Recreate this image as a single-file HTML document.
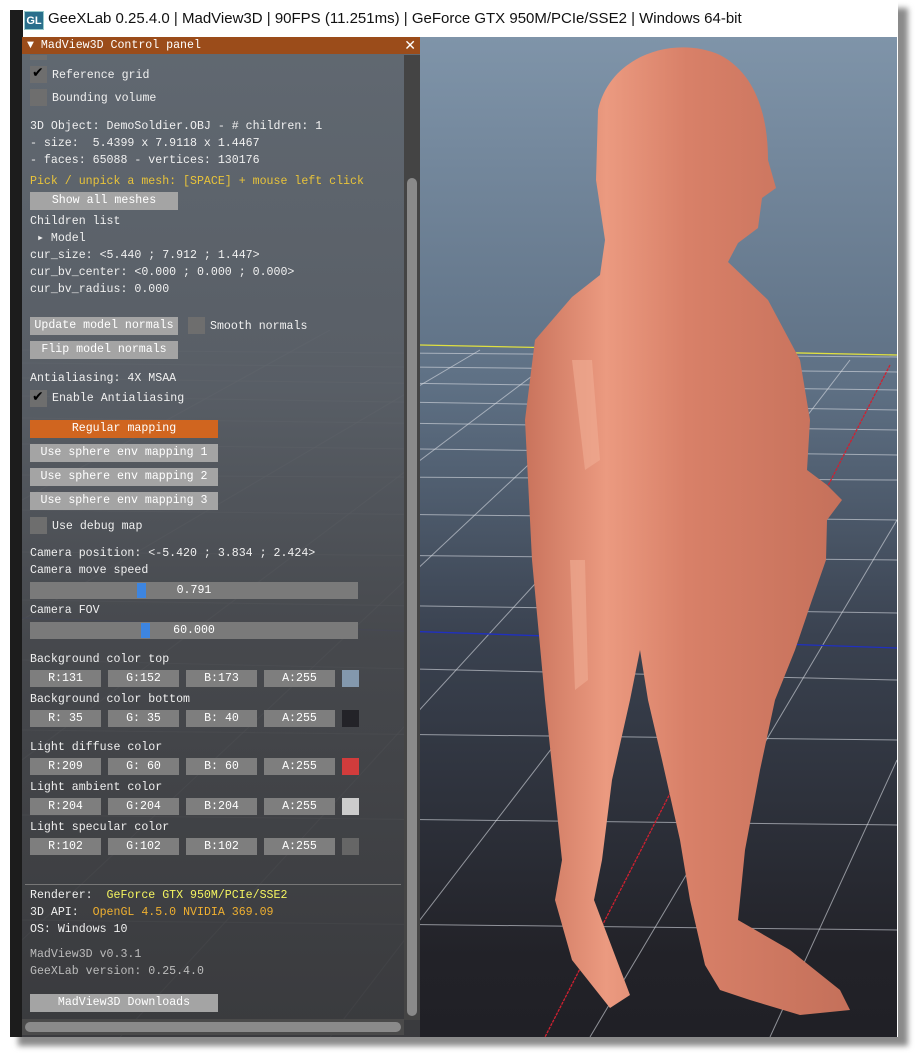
<!DOCTYPE html>
<html><head><meta charset="utf-8"><style>
*{margin:0;padding:0;box-sizing:border-box}
body{width:922px;height:1062px;background:#fff;position:relative;overflow:hidden;font-family:"Liberation Mono",monospace}
.shadow{position:absolute;left:18px;top:8px;width:890px;height:1038px;background:#8a8a8a;filter:blur(3px)}
.win{position:absolute;left:10px;top:0;width:888px;height:1037px;background:#fff}
.lbar{position:absolute;left:10px;top:10px;width:13px;height:1027px;background:#1c1c1c}
.title{position:absolute;left:48px;top:10px;font:15px "Liberation Sans",sans-serif;color:#111;white-space:nowrap}
.ico{position:absolute;left:24px;top:11px;width:20px;height:19px;background:#2a6f8c;color:#fff;font:bold 11px "Liberation Sans",sans-serif;text-align:center;line-height:19px;border:1px solid #9cc}
.vp{position:absolute;left:22px;top:37px;width:875px;height:1000px;background:linear-gradient(#7f94a9,#5e7084 35%,#3a4250 60%,#222228 92%,#202026);overflow:hidden}
.panel{position:absolute;left:22px;top:37px;width:398px;height:1000px;background:linear-gradient(#5f666e,#585d64 35%,#47494d 60%,#3b3c3f);opacity:.95}
.ph{position:absolute;left:22px;top:37px;width:398px;height:17px;background:#9b4c1a;color:#fff;font-size:11.6px;line-height:17px;padding-left:5px;white-space:pre}
.ph span{position:absolute;right:4px;top:0;font-family:"Liberation Sans",sans-serif;font-size:14px}
.t{position:absolute;left:30px;font-size:11.6px;color:#f0f0f0;white-space:pre;line-height:14px;margin-top:1px}
.y{color:#e8c33a}.yy{color:#f4f460}.o{color:#f0b030}.g{color:#bcbcbc}
.b{position:absolute;height:18px;background:#a4a4a4;color:#fff;font-size:11.6px;line-height:18px;text-align:center;white-space:pre}
.cb{position:absolute;left:30px;width:17px;height:17px;background:#6e6e6e}
.ck::after{content:"✔";position:absolute;left:2px;top:-1px;color:#000;font:bold 14px "DejaVu Sans",sans-serif}
.f{position:absolute;height:17px;width:71px;background:#7e7e7e;color:#fff;font-size:11.6px;line-height:17px;text-align:center;white-space:pre}
.sw{position:absolute;left:342px;width:17px;height:17px}
.sl{position:absolute;left:30px;width:328px;height:17px;background:#7a7a7a;color:#fff;font-size:11.6px;line-height:17px;text-align:center}
.h{position:absolute;top:1px;width:9px;height:15px;background:#3d85e0}
</style></head><body>
<div class="shadow"></div>
<div class="win"></div>
<div class="lbar"></div>
<div class="ico">GL</div>
<div class="title">GeeXLab 0.25.4.0 | MadView3D | 90FPS (11.251ms) | GeForce GTX 950M/PCIe/SSE2 | Windows 64-bit</div>
<div class="vp">
<svg width="875" height="1000" viewBox="22 37 875 1000" style="position:absolute;left:0;top:0">
<g stroke="#d8dce2" stroke-opacity=".6" stroke-width="1" fill="none">
<line x1="22" y1="350" x2="897" y2="357"/><line x1="22" y1="363" x2="897" y2="372"/><line x1="22" y1="378" x2="897" y2="390"/>
<line x1="22" y1="396" x2="897" y2="410"/><line x1="22" y1="418" x2="897" y2="430"/><line x1="22" y1="444" x2="897" y2="455"/>
<line x1="22" y1="475" x2="897" y2="480"/><line x1="22" y1="510" x2="897" y2="520"/><line x1="22" y1="552" x2="897" y2="560"/>
<line x1="22" y1="600" x2="897" y2="613"/><line x1="22" y1="660" x2="897" y2="680"/><line x1="22" y1="730" x2="897" y2="740"/>
<line x1="22" y1="815" x2="897" y2="825"/><line x1="22" y1="920" x2="897" y2="930"/>
<line x1="22" y1="500" x2="330" y2="330"/><line x1="22" y1="620" x2="480" y2="350"/><line x1="22" y1="760" x2="560" y2="355"/>
<line x1="22" y1="940" x2="640" y2="360"/><line x1="120" y1="1037" x2="740" y2="360"/><line x1="330" y1="1037" x2="850" y2="360"/>
<line x1="590" y1="1037" x2="897" y2="520"/><line x1="770" y1="1037" x2="897" y2="760"/>
</g>
<line x1="420" y1="345" x2="897" y2="355" stroke="#e0e040" stroke-width="1.3"/>
<line x1="22" y1="618" x2="897" y2="648" stroke="#2030c0" stroke-width="1.3"/>
<line x1="890" y1="365" x2="545" y2="1037" stroke="#d02030" stroke-width="1.3" stroke-dasharray="3 1"/>
<defs><linearGradient id="sk" x1="0" x2="1"><stop offset="0" stop-color="#c9735c"/><stop offset=".25" stop-color="#eb9a80"/><stop offset=".5" stop-color="#d88068"/><stop offset="1" stop-color="#c4705a"/></linearGradient></defs>
<path fill="url(#sk)" d="M598 110 C610 55 675 35 720 55 C758 75 768 120 768 160 L776 188 L762 198 L758 228 L738 243 L728 262 L768 300 L800 360 L810 420 L807 470 L827 485 L842 500 L827 520 L826 560 L812 600 L795 650 L775 700 L760 770 L745 850 L738 920 L790 950 L840 990 L850 1010 L800 1015 L750 1000 L720 990 L705 965 L690 900 L680 840 L662 760 L648 700 L640 650 L630 700 L612 780 L602 860 L594 900 L630 995 L610 1008 L572 960 L555 900 L562 860 L545 700 L532 560 L525 420 L535 340 L572 297 L600 275 L605 240 L596 180 Z"/>
<path fill="#f0ae95" opacity=".6" d="M572 360 L592 360 L600 460 L585 470 Z M570 560 L585 560 L588 680 L575 690 Z"/>
</svg>
</div>
<div class="panel"></div>
<div class="ph">▼ MadView3D Control panel<span>✕</span></div>
<div style="position:absolute;left:404px;top:55px;width:16px;height:965px;background:#444"></div>
<div style="position:absolute;left:407px;top:178px;width:10px;height:838px;background:#8a8a8a;border-radius:5px"></div>
<div style="position:absolute;left:22px;top:1019px;width:382px;height:16px;background:#4a4a4a"></div>
<div style="position:absolute;left:25px;top:1022px;width:376px;height:10px;background:#8a8a8a;border-radius:5px"></div>
<div class="cb" style="top:55px;height:5px"></div>
<div class="cb ck" style="top:66px"></div><div class="t" style="left:52px;top:68px">Reference grid</div>
<div class="cb" style="top:89px"></div><div class="t" style="left:52px;top:91px">Bounding volume</div>
<div class="t" style="top:119px">3D Object: DemoSoldier.OBJ - # children: 1</div>
<div class="t" style="top:136px">- size:  5.4399 x 7.9118 x 1.4467</div>
<div class="t" style="top:153px">- faces: 65088 - vertices: 130176</div>
<div class="t y" style="top:174px">Pick / unpick a mesh: [SPACE] + mouse left click</div>
<div class="b" style="left:30px;top:192px;width:148px">Show all meshes</div>
<div class="t" style="top:214px">Children list</div>
<div class="t" style="top:231px"> ▸ Model</div>
<div class="t" style="top:248px">cur_size: &lt;5.440 ; 7.912 ; 1.447&gt;</div>
<div class="t" style="top:265px">cur_bv_center: &lt;0.000 ; 0.000 ; 0.000&gt;</div>
<div class="t" style="top:282px">cur_bv_radius: 0.000</div>
<div class="b" style="left:30px;top:317px;width:148px">Update model normals</div>
<div class="cb" style="left:188px;top:317px"></div><div class="t" style="left:210px;top:319px">Smooth normals</div>
<div class="b" style="left:30px;top:341px;width:148px">Flip model normals</div>
<div class="t" style="top:371px">Antialiasing: 4X MSAA</div>
<div class="cb ck" style="top:390px"></div><div class="t" style="left:52px;top:391px">Enable Antialiasing</div>
<div class="b" style="left:30px;top:420px;width:188px;background:#d0651f">Regular mapping</div>
<div class="b" style="left:30px;top:444px;width:188px">Use sphere env mapping 1</div>
<div class="b" style="left:30px;top:468px;width:188px">Use sphere env mapping 2</div>
<div class="b" style="left:30px;top:492px;width:188px">Use sphere env mapping 3</div>
<div class="cb" style="top:517px"></div><div class="t" style="left:52px;top:519px">Use debug map</div>
<div class="t" style="top:546px">Camera position: &lt;-5.420 ; 3.834 ; 2.424&gt;</div>
<div class="t" style="top:563px">Camera move speed</div>
<div class="sl" style="top:582px"><div class="h" style="left:107px"></div>0.791</div>
<div class="t" style="top:603px">Camera FOV</div>
<div class="sl" style="top:622px"><div class="h" style="left:111px"></div>60.000</div>
<div class="t" style="top:652px">Background color top</div>
<div class="f" style="left:30px;top:670px">R:131</div><div class="f" style="left:108px;top:670px">G:152</div><div class="f" style="left:186px;top:670px">B:173</div><div class="f" style="left:264px;top:670px">A:255</div><div class="sw" style="top:670px;background:#8398ad"></div>
<div class="t" style="top:692px">Background color bottom</div>
<div class="f" style="left:30px;top:710px">R: 35</div><div class="f" style="left:108px;top:710px">G: 35</div><div class="f" style="left:186px;top:710px">B: 40</div><div class="f" style="left:264px;top:710px">A:255</div><div class="sw" style="top:710px;background:#232328"></div>
<div class="t" style="top:740px">Light diffuse color</div>
<div class="f" style="left:30px;top:758px">R:209</div><div class="f" style="left:108px;top:758px">G: 60</div><div class="f" style="left:186px;top:758px">B: 60</div><div class="f" style="left:264px;top:758px">A:255</div><div class="sw" style="top:758px;background:#d13c3c"></div>
<div class="t" style="top:780px">Light ambient color</div>
<div class="f" style="left:30px;top:798px">R:204</div><div class="f" style="left:108px;top:798px">G:204</div><div class="f" style="left:186px;top:798px">B:204</div><div class="f" style="left:264px;top:798px">A:255</div><div class="sw" style="top:798px;background:#cccccc"></div>
<div class="t" style="top:820px">Light specular color</div>
<div class="f" style="left:30px;top:838px">R:102</div><div class="f" style="left:108px;top:838px">G:102</div><div class="f" style="left:186px;top:838px">B:102</div><div class="f" style="left:264px;top:838px">A:255</div><div class="sw" style="top:838px;background:#666"></div>
<div style="position:absolute;left:25px;top:884px;width:376px;height:1px;background:#777"></div>
<div class="t" style="top:888px">Renderer:  <span class="yy">GeForce GTX 950M/PCIe/SSE2</span></div>
<div class="t" style="top:905px">3D API:  <span class="o">OpenGL 4.5.0 NVIDIA 369.09</span></div>
<div class="t" style="top:922px">OS: Windows 10</div>
<div class="t g" style="top:947px">MadView3D v0.3.1</div>
<div class="t g" style="top:964px">GeeXLab version: 0.25.4.0</div>
<div class="b" style="left:30px;top:994px;width:188px">MadView3D Downloads</div>
</body></html>
